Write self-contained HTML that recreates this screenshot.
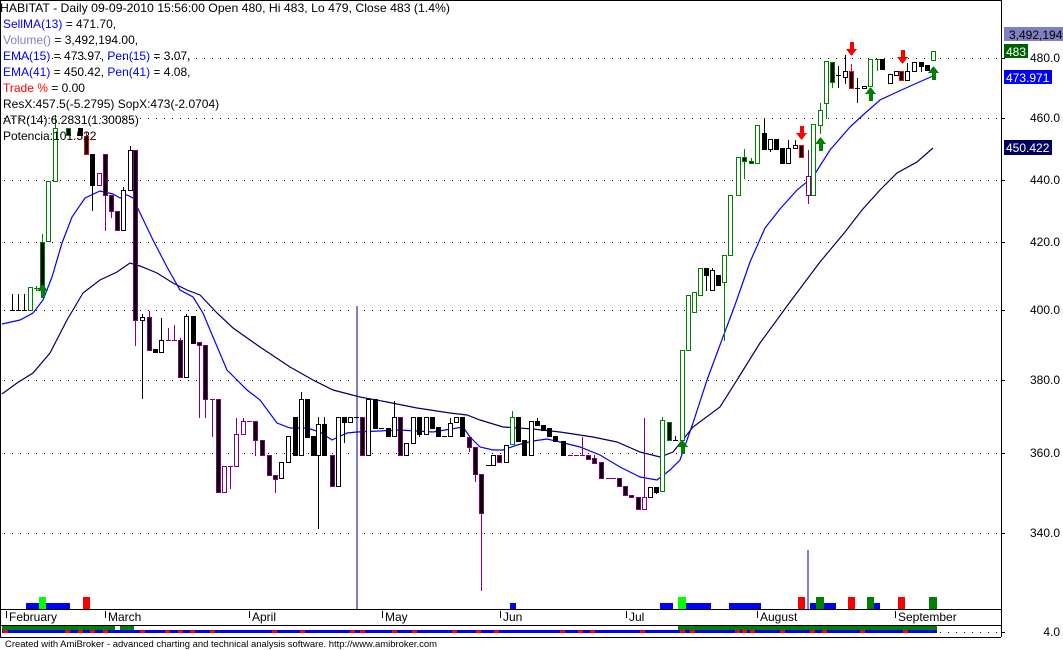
<!DOCTYPE html>
<html><head><meta charset="utf-8"><style>
html,body{margin:0;padding:0;background:#fff;width:1063px;height:650px;overflow:hidden}
svg{display:block;font-family:"Liberation Sans",Arial,sans-serif}
</style></head><body>
<svg id="s" width="1063" height="650" viewBox="0 0 1063 650" xmlns="http://www.w3.org/2000/svg" shape-rendering="crispEdges">
<rect width="1063" height="650" fill="#fff"/>
<g id="grid" stroke="#000" stroke-width="1" stroke-dasharray="1 7"></g>
<g id="vol"></g>
<g id="lines" fill="none" shape-rendering="auto"></g>
<g id="c"></g>
<g id="arr"></g>
<line x1="0.5" y1="0" x2="0.5" y2="637" stroke="#000"/>
<line x1="0" y1="0.5" x2="1001" y2="0.5" stroke="#000"/>
<line x1="1001.5" y1="0" x2="1001.5" y2="637" stroke="#000"/>
<line x1="0" y1="609.5" x2="1001" y2="609.5" stroke="#000"/>
<line x1="0" y1="625.5" x2="1001" y2="625.5" stroke="#000"/>
<line x1="0" y1="637.5" x2="1001" y2="637.5" stroke="#000"/>
<g id="axis" font-size="12" fill="#000"></g>
<g id="strip"></g>
<g font-size="12">
<rect x="1004" y="27" width="59" height="14" fill="#8080c0"/>
<text x="1009" y="39" fill="#000">3,492,194</text>
<rect x="1004" y="44" width="24" height="14" fill="#006000"/>
<text x="1006" y="56" fill="#fff">483</text>
<rect x="1004" y="70" width="48" height="14" fill="#0000ff"/>
<text x="1006" y="82" fill="#fff">473.971</text>
<rect x="1004" y="140" width="48" height="15" fill="#000060"/>
<text x="1006" y="152" fill="#fff">450.422</text>
</g>
<g font-size="12" fill="#000">
<text x="0" y="12" textLength="450" lengthAdjust="spacingAndGlyphs">HABITAT - Daily 09-09-2010 15:56:00 Open 480, Hi 483, Lo 479, Close 483 (1.4%)</text>
<text x="3" y="28"><tspan fill="#0000ff">SellMA(13)</tspan> = 471.70,</text>
<text x="3" y="44"><tspan fill="#8080c0">Volume()</tspan> = 3,492,194.00,</text>
<text x="3" y="60"><tspan fill="#0000ff">EMA(15)</tspan> = 473.97, <tspan fill="#0000ff">Pen(15)</tspan> = 3.07,</text>
<text x="3" y="76"><tspan fill="#0000ff">EMA(41)</tspan> = 450.42, <tspan fill="#0000ff">Pen(41)</tspan> = 4.08,</text>
<text x="3" y="92"><tspan fill="#ff0000">Trade %</tspan> = 0.00</text>
<text x="3" y="108">ResX:457.5(-5.2795) SopX:473(-2.0704)</text>
<text x="3" y="124">ATR(14):6.2831(1.30085)</text>
<text x="3" y="140">Potencia:101.522</text>
<text x="5" y="647" font-size="9.5" textLength="432" lengthAdjust="spacingAndGlyphs">Created with AmiBroker - advanced charting and technical analysis software. http://www.amibroker.com</text>
</g>
</svg>
<script>
var NS="http://www.w3.org/2000/svg";
function el(p,t,a){var e=document.createElementNS(NS,t);for(var k in a)e.setAttribute(k,a[k]);document.getElementById(p).appendChild(e);return e;}
[58,118,180,242,310,380,453,533,632].forEach(function(y){el('grid','line',{x1:4,y1:y+.5,x2:1000,y2:y+.5});});
var ax=[[58,'480.0'],[118,'460.0'],[180,'440.0'],[242,'420.0'],[310,'400.0'],[380,'380.0'],[453,'360.0'],[533,'340.0'],[632,'4.0']];
ax.forEach(function(a){el('axis','line',{x1:1001,y1:a[0]+.5,x2:1005,y2:a[0]+.5,stroke:'#000'});var t=el('axis','text',{x:1060,y:a[0]+4,'text-anchor':'end'});t.textContent=a[1];});
[[6,'February'],[105,'March'],[249,'April'],[382,'May'],[500,'Jun'],[626,'Jul'],[757,'August'],[895,'September']].forEach(function(m){
el('axis','line',{x1:m[0]+.5,y1:611,x2:m[0]+.5,y2:618,stroke:'#000'});var t=el('axis','text',{x:m[0]+3,y:621});t.textContent=m[1];});
el('strip','rect',{x:2,y:626,width:113,height:4,fill:'#008000'});
el('strip','rect',{x:120,y:626,width:14,height:4,fill:'#008000'});
el('strip','rect',{x:678,y:626,width:259,height:4,fill:'#008000'});
el('strip','rect',{x:2,y:630,width:935,height:3,fill:'#0000ff'});
[3,65,78,90,103,140,165,178,190,210,272,300,350,360,392,412,452,476,494,560,578,590,640,680,690,735,742,750,780,810,822,860,903].forEach(function(x){el('strip','rect',{x:x,y:630,width:5,height:3,fill:'#ff0000'});});
var V=[[26,603,44,'#0000ff'],[39,597,7,'#00ff00'],[83,597,7,'#ff0000'],[510,603,6,'#0000ff'],[660,603,13,'#0000ff'],[686,603,25,'#0000ff'],[678,597,8,'#00ff00'],[729,603,32,'#0000ff'],[798,597,7,'#ff0000'],[810,603,26,'#0000ff'],[816,597,8,'#008000'],[848,597,7,'#ff0000'],[874,603,6,'#0000ff'],[867,597,7,'#008000'],[898,597,7,'#ff0000'],[929,597,8,'#008000']];
V.forEach(function(v){el('vol','rect',{x:v[0],y:v[1],width:v[2],height:609-v[1],fill:v[3]});});
el('vol','rect',{x:356,y:306,width:2,height:303,fill:'#8080c0'});
el('vol','rect',{x:807,y:550,width:2,height:59,fill:'#8080c0'});
var e15=[[2,324],[20,320],[33,313],[43,300],[52,277],[62,243],[72,217],[85,198],[100,191],[113,194],[120,198],[127,195],[133,198],[140,213],[153,240],[167,267],[180,290],[193,297],[203,313],[213,337],[227,370],[237,380],[247,390],[260,400],[277,423],[290,428],[307,428],[320,432],[332,440],[347,433],[357,432],[400,430],[433,432],[463,427],[470,437],[480,447],[493,450],[503,450],[517,445],[533,441],[547,439],[560,442],[580,447],[600,455],[620,467],[640,477],[657,480],[670,470],[680,460],[693,423],[707,380],[720,345],[735,305],[750,262],[765,228],[780,209],[797,190],[813,177],[830,150],[850,127],[863,115],[880,100],[897,92],[917,83],[933,76]];
var e41=[[2,394],[17,383],[33,373],[50,353],[67,320],[83,293],[100,280],[117,272],[130,263],[140,266],[157,273],[173,283],[187,290],[200,295],[217,313],[233,328],[260,347],[290,367],[313,380],[333,390],[360,397],[387,402],[417,408],[450,413],[467,415],[480,420],[503,427],[533,429],[560,432],[593,437],[617,442],[640,452],[660,457],[673,452],[693,427],[720,407],[737,380],[760,343],[790,302],[820,262],[845,232],[862,210],[880,190],[897,173],[917,162],[933,148]];
function pl(p,c){el('lines','polyline',{points:p.map(function(q){return q.join(',')}).join(' '),stroke:c,'stroke-width':1.2});}
pl(e41,'#000060');pl(e15,'#0000ff');
var C=[[12,310,310,294,310,'b'],[18,310,310,294,310,'b'],[24,310,310,294,310,'b'],[30,287,310,287,310,'g'],[36,288,288,286,290,'G'],[42,242,290,234,290,'G'],[48,181,241,181,241,'g'],[55,128,181,115,181,'g'],[68,128,135,128,135,'G'],[80,128,135,128,135,'b'],[86,136,154,132,154,'r'],[92,154,185,154,210,'b'],[99,173,185,173,185,'P'],[105,154,195,154,230,'p'],[111,195,211,195,217,'p'],[117,211,230,211,230,'p'],[123,190,230,187,230,'w'],[130,150,190,146,190,'w'],[135,150,320,150,345,'p'],[142,317,320,314,398,'w'],[149,317,350,311,350,'p'],[155,349,352,349,352,'b'],[161,340,352,318,352,'w'],[168,340,340,328,340,'p'],[174,340,340,325,340,'p'],[180,340,377,338,377,'p'],[186,316,377,314,377,'w'],[193,316,343,316,343,'b'],[199,342,345,342,417,'p'],[205,345,399,345,417,'p'],[212,399,399,399,436,'p'],[218,399,492,399,492,'p'],[224,466,492,466,492,'P'],[230,466,466,466,488,'p'],[236,434,466,418,466,'P'],[243,421,434,418,434,'P'],[249,421,421,421,421,'p'],[255,421,440,421,455,'p'],[262,440,455,440,455,'p'],[269,455,475,455,475,'p'],[275,475,479,475,492,'p'],[281,462,478,462,478,'w'],[288,436,462,436,462,'w'],[295,417,455,417,455,'b'],[301,399,455,392,455,'w'],[307,399,437,399,437,'b'],[313,436,455,436,455,'b'],[318,424,455,417,528,'w'],[324,424,455,417,455,'b'],[332,455,486,455,486,'p'],[338,417,486,417,486,'w'],[344,417,422,417,442,'b'],[350,417,422,417,422,'w'],[356,417,417,417,417,'b'],[362,417,455,417,455,'p'],[368,399,455,399,455,'w'],[375,399,428,399,428,'b'],[381,428,428,428,428,'b'],[388,428,436,428,436,'b'],[394,417,436,401,436,'w'],[400,417,455,417,455,'p'],[406,443,455,443,455,'w'],[413,417,443,417,443,'w'],[419,417,434,417,436,'b'],[426,417,434,417,434,'w'],[432,417,428,417,428,'b'],[438,427,436,427,436,'b'],[444,436,436,436,436,'b'],[450,423,436,418,436,'w'],[456,417,422,417,422,'w'],[462,417,436,417,436,'b'],[469,437,447,437,451,'p'],[475,447,474,447,481,'p'],[481,474,513,474,590,'p'],[488,465,465,465,465,'b'],[493,455,465,455,465,'w'],[499,455,462,455,462,'p'],[506,445,462,445,462,'w'],[512,417,444,411,444,'g'],[518,417,441,417,441,'b'],[524,440,455,440,455,'b'],[531,421,455,421,455,'w'],[537,421,425,418,425,'b'],[543,425,430,425,430,'b'],[549,428,436,428,436,'b'],[555,436,441,436,441,'b'],[563,441,455,441,455,'b'],[570,455,455,455,455,'p'],[576,455,455,455,455,'p'],[582,455,455,437,455,'p'],[588,455,459,455,459,'p'],[594,458,463,455,463,'p'],[601,462,478,462,478,'p'],[608,478,478,478,478,'p'],[613,478,478,478,478,'p'],[619,478,486,478,486,'p'],[625,486,495,486,495,'p'],[631,495,497,495,497,'p'],[638,497,509,497,509,'p'],[644,497,509,418,509,'P'],[650,487,497,487,497,'w'],[656,487,492,487,493,'b'],[662,420,491,417,491,'g'],[669,422,440,422,440,'G'],[675,440,440,436,440,'b'],[682,350,440,350,440,'g'],[688,295,350,295,350,'g'],[694,292,312,292,312,'g'],[700,268,295,268,295,'g'],[706,268,275,268,290,'b'],[712,270,290,268,290,'w'],[718,275,285,275,285,'b'],[724,255,282,255,340,'g'],[730,195,255,195,255,'g'],[738,157,195,157,195,'g'],[744,157,161,149,178,'G'],[751,161,163,158,163,'G'],[757,125,163,125,163,'g'],[764,133,149,119,149,'b'],[770,139,149,139,151,'w'],[776,139,149,139,149,'b'],[782,148,163,148,163,'b'],[788,148,163,140,163,'w'],[795,145,148,140,148,'w'],[801,145,157,145,157,'r'],[808,176,195,150,203,'P'],[813,124,195,124,195,'g'],[820,110,125,103,133,'g'],[826,61,103,61,118,'g'],[832,62,82,62,87,'G'],[838,75,75,66,87,'b'],[845,71,77,55,83,'w'],[851,71,88,64,88,'r'],[857,88,88,78,102,'b'],[864,86,88,86,88,'w'],[870,59,86,59,86,'g'],[877,59,59,59,70,'G'],[882,59,69,59,69,'b'],[890,74,83,74,83,'w'],[896,71,75,71,75,'w'],[901,71,80,71,80,'r'],[907,71,80,63,80,'w'],[914,62,71,62,71,'w'],[921,62,66,62,71,'b'],[927,65,70,65,70,'b'],[933,51,60,51,60,'g']];
var T={w:['#fff','#000'],b:['#000','#000'],g:['#fff','#008000'],G:['#000','#008000'],p:['#000','#800080'],P:['#fff','#800080'],r:['#000','#ff0000']};
C.forEach(function(c){var x=c[0],t=T[c[5]];
 el('c','line',{x1:x+.5,y1:c[3],x2:x+.5,y2:c[4]+1,stroke:t[1]});
 if(c[2]-c[1]<2){el('c','line',{x1:x-2,y1:c[1]+.5,x2:x+3,y2:c[1]+.5,stroke:t[1]});}
 else el('c','rect',{x:x-1.5,y:c[1]+.5,width:4,height:c[2]-c[1],fill:t[0],stroke:t[1]});
});
function up(x,y){el('arr','polygon',{points:(x-5)+','+(y+7)+' '+(x+.5)+','+y+' '+(x+6)+','+(y+7),fill:'#008000'});el('arr','rect',{x:x-1,y:y+6,width:4,height:8,fill:'#008000'});}
function dn(x,y){el('arr','rect',{x:x-1,y:y,width:4,height:8,fill:'#ff0000'});el('arr','polygon',{points:(x-5)+','+(y+7)+' '+(x+.5)+','+(y+14)+' '+(x+6)+','+(y+7),fill:'#ff0000'});}
up(42,284);up(682,440);up(820,137);up(870,87);up(933,66);
dn(801,126);dn(851,42);dn(902,50);
</script>
</body></html>
